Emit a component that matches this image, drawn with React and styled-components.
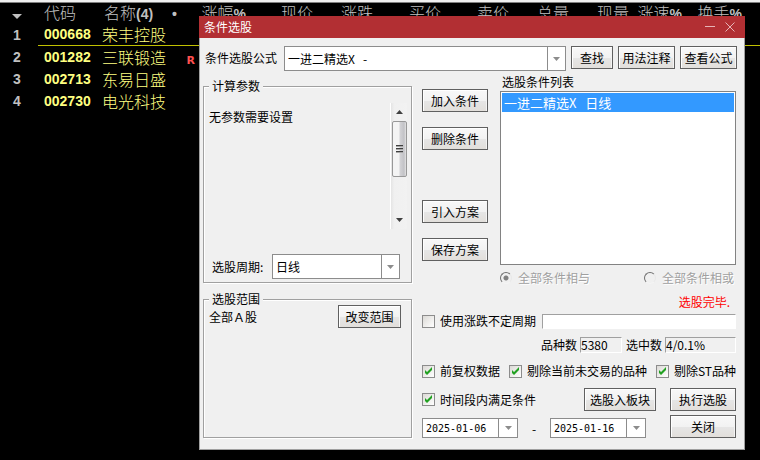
import { useState } from "react";
import styled, { createGlobalStyle } from "styled-components";

const GlobalStyle = createGlobalStyle`
  * {
    box-sizing: border-box;
  }

  body {
    margin: 0;
    background: #000;
    font-family: "Noto Sans CJK SC", sans-serif;
    font-size: 12px;
    line-height: 18px;
  }

  button, input, select {
    font: inherit;
    color: inherit;
    margin: 0;
  }
`;

const Screen = styled.main`
  position: relative;
  min-height: 100vh;
  overflow: hidden;
  background: #000;
  border-top: 2px solid #f0f0f0;
`;

const Quotes = styled.table`
  width: 100%;
  table-layout: fixed;
  border-collapse: collapse;
  border-top: 1px solid #808080;
`;

const Col = styled.col`
  width: ${(props) => props.$width};
`;

const HeadCell = styled.th`
  height: 21px;
  padding: 0 0 0 ${(props) => props.$indent || "0"};
  color: #c0c0c0;
  font-size: 16px;
  font-weight: 300;
  line-height: 18px;
  text-align: ${(props) => props.$align || "right"};
  vertical-align: top;
  white-space: nowrap;

  b {
    font: bold 14px "Liberation Sans", sans-serif;
  }
`;

const Cell = styled.td`
  height: 22px;
  padding: 0 0 0 ${(props) => props.$indent || "0"};
  color: ${(props) => props.$color || "#ffff80"};
  font-size: 16px;
  font-weight: 300;
  line-height: 20px;
  text-align: ${(props) => props.$align || "left"};
  white-space: nowrap;
`;

const NumberCell = styled(Cell)`
  font: bold 14px "Liberation Sans", sans-serif;
`;

const MarkCell = styled(Cell)`
  font: bold 11px "DejaVu Sans", sans-serif;
  vertical-align: bottom;
`;

const QuoteRow = styled.tr`
  td + td {
    border-bottom: 1px solid ${(props) => (props.$active ? "#c0c000" : "#000")};
  }
`;

const Dialog = styled.section`
  position: absolute;
  top: 14px;
  left: 199px;
  right: 15px;
  background: #f0f0f0;
  color: #000;
  border: 1px solid #a0a0a0;
  border-top: none;
`;

const TitleBar = styled.header`
  display: flex;
  align-items: center;
  height: 22px;
  margin: 0 -1px;
  padding: 0 5px;
  background: #b22f33;
  color: #fff;
`;

const Title = styled.h1`
  flex: 1;
  margin: 0;
  font-size: 12px;
  font-weight: normal;
`;

const TitleButton = styled.button`
  display: flex;
  width: 20px;
  padding: 0 5px;
  background: none;
  border: none;
`;

const FormulaBar = styled.div`
  display: flex;
  gap: 5px;
  align-items: flex-start;
  padding: 8px 7px 0 5px;
`;

const FormulaLabel = styled.label`
  width: 74px;
  line-height: 24px;
`;

const Body = styled.div`
  display: grid;
  grid-template-columns: 209px 1fr;
  gap: 10px;
  padding: 4px 8px 11px 3px;
`;

const Button = styled.button`
  width: ${(props) => props.$width || "66px"};
  height: 23px;
  padding: 0;
  line-height: 18px;
  white-space: nowrap;
  background: linear-gradient(#f8f8f8, #f2f2f2 50%, #e6e6e6 51%, #e2dfdb);
  border: 1px solid #606060;
  box-shadow: inset 1px 1px #fff, inset -1px 0 #f4f4f4;
`;

const ComboFrame = styled.div`
  display: grid;
  flex: 1;
  min-width: 0;
  height: 25px;
  background: #fff;
  border: 1px solid #8c8c8c;
`;

const ComboSelect = styled.select`
  grid-area: 1 / 1;
  width: 100%;
  padding: 0 20px 0 3px;
  appearance: none;
  background: none;
  border: none;
  border-radius: 0;
  outline: none;
`;

const ComboArrow = styled.span`
  display: flex;
  grid-area: 1 / 1;
  justify-self: end;
  align-items: center;
  justify-content: center;
  width: 18px;
  border-left: 1px solid #8c8c8c;
  pointer-events: none;
`;

const LeftColumn = styled.div`
  display: flex;
  flex-direction: column;
  gap: 10px;
  padding-top: 5px;
`;

const Group = styled.fieldset`
  flex: ${(props) => (props.$fill ? "1" : "none")};
  min-width: 0;
  margin: 0;
  padding: 0 4px 3px 5px;
  border: 1px solid #a0a0a0;
  box-shadow: 1px 1px #fff, inset 1px 1px #fff;
`;

const Legend = styled.legend`
  padding: 0 3px;
  line-height: 12px;
  background: #f0f0f0;
`;

const ParamPanel = styled.div`
  display: flex;
  justify-content: space-between;
  height: 126px;
  margin-top: 11px;
`;

const ParamText = styled.p`
  margin: 5px 0 0;
`;

const ScrollBar = styled.div`
  display: flex;
  flex-direction: column;
  align-items: center;
  width: 17px;
  background: linear-gradient(90deg, #e4e4e4, #f0f0f0 20%, #f2f2f2);
  border-left: 1px solid #fff;
`;

const ScrollArrow = styled.button`
  display: flex;
  align-items: center;
  justify-content: center;
  width: 16px;
  height: 18px;
  padding: 0;
  background: none;
  border: none;
`;

const ScrollThumb = styled.div`
  display: flex;
  flex-direction: column;
  align-items: center;
  justify-content: center;
  gap: 1px;
  width: 15px;
  height: 56px;
  margin-bottom: auto;
  background: linear-gradient(90deg, #f4f4f4 45%, #d2d2d5 55%, #c2c2c6 85%, #e4e4e4);
  border: 1px solid #989898;
  border-radius: 2px;
`;

const GripLine = styled.span`
  width: 7px;
  height: 2px;
  border-top: 1px solid #404040;
  border-bottom: 1px solid #a8a8a8;
`;

const PeriodRow = styled.div`
  display: grid;
  grid-template-columns: 60px 1fr;
  align-items: center;
  margin-top: 25px;
  padding: 0 7px 0 3px;
`;

const RangeRow = styled.div`
  display: flex;
  align-items: center;
  justify-content: space-between;
  padding-right: 6px;
`;

const RightColumn = styled.div`
  display: flex;
  flex-direction: column;
`;

const Conditions = styled.div`
  display: grid;
  grid-template-columns: 66px 1fr;
  gap: 12px;
`;

const ActionColumn = styled.div`
  display: flex;
  flex-direction: column;
  gap: 50px;
  padding-top: 14px;
`;

const ActionGroup = styled.div`
  display: flex;
  flex-direction: column;
  gap: 15px;
`;

const ListColumn = styled.div`
  display: flex;
  flex-direction: column;
`;

const ListTitle = styled.h2`
  margin: 0 0 2px 2px;
  font-size: 12px;
  font-weight: normal;
  line-height: 14px;
`;

const ListBox = styled.ul`
  min-height: 174px;
  margin: 0;
  padding: 1px;
  list-style: none;
  background: #fff;
  border: 1px solid #828282;
`;

const ListItem = styled.li`
  height: 19px;
  padding-left: 2px;
  color: #fff;
  font-size: 13px;
  line-height: 19px;
  background: #3399ff;
`;

const RadioRow = styled.div`
  display: flex;
  justify-content: space-between;
  margin-top: 4px;
  padding-right: 2px;
`;

const RadioLabel = styled.label`
  display: flex;
  gap: 6px;
  align-items: center;
  color: #a0a0a0;
  text-shadow: 1px 1px #fff;
`;

const Radio = styled.input`
  width: 12px;
  height: 12px;
  appearance: none;
  background: ${(props) =>
    props.checked ? "radial-gradient(#808080 2px, #f0f0f0 3px)" : "#f0f0f0"};
  border: 1px solid;
  border-color: #707070 #e8e8e8 #f4f4f4 #707070;
  border-radius: 50%;
`;

const Status = styled.p`
  margin: 6px 6px 0 0;
  color: #f00;
  text-align: right;
`;

const Row = styled.div`
  display: flex;
  align-items: ${(props) => props.$align || "center"};
  justify-content: ${(props) => props.$justify || "space-between"};
  margin-top: ${(props) => props.$top || "8px"};
`;

const CheckLabel = styled.label`
  display: flex;
  gap: 5px;
  align-items: center;
  white-space: nowrap;
`;

const CheckFrame = styled.span`
  display: grid;
  width: 13px;
  height: 13px;

  svg {
    grid-area: 1 / 1;
    pointer-events: none;
  }
`;

const CheckInput = styled.input`
  grid-area: 1 / 1;
  width: 13px;
  height: 13px;
  appearance: none;
  background: linear-gradient(135deg, #dcdad6, #fff);
  border: 1px solid #8c8c8c;
`;

const Progress = styled.input`
  flex: 1;
  min-width: 0;
  height: 15px;
  margin-left: 6px;
  padding: 0;
  background: #fff;
  border: 1px solid;
  border-color: #a0a0a0 #fff #fff #a0a0a0;
  border-radius: 0;
`;

const Count = styled.output`
  width: ${(props) => props.$width};
  height: 16px;
  margin: 0 4px 0 3px;
  line-height: 14px;
  border: 1px solid;
  border-color: #a0a0a0 #fff #fff #a0a0a0;

  &:last-child {
    margin-right: 0;
  }
`;

const DateFrame = styled.div`
  display: flex;
  width: 96px;
  height: 20px;
  background: #fff;
  border: 1px solid #8c8c8c;
`;

const DateInput = styled.input`
  flex: 1;
  min-width: 0;
  padding: 0 0 0 3px;
  font: 10px "DejaVu Sans Mono", monospace;
  background: none;
  border: none;
  outline: none;
`;

const DateButton = styled.button`
  display: flex;
  align-items: center;
  justify-content: center;
  width: 19px;
  padding: 0;
  background: none;
  border: none;
  border-left: 1px solid #8c8c8c;
`;

const DateDash = styled.span`
  width: 32px;
  text-align: center;
`;

const Push = styled.div`
  display: flex;
  gap: 14px;
  margin-left: auto;
`;

const stocks = [
  { code: "000668", name: "荣丰控股", active: true },
  { code: "001282", name: "三联锻造", mark: "R" },
  { code: "002713", name: "东易日盛" },
  { code: "002730", name: "电光科技" },
];

const columns = [
  { title: "涨幅", unit: "%", width: "51px" },
  { title: "现价", width: "67px" },
  { title: "涨跌", width: "60px" },
  { title: "买价", width: "68px" },
  { title: "卖价", width: "68px" },
  { title: "总量", width: "60px" },
  { title: "现量", width: "60px" },
  { title: "涨速", unit: "%", width: "53px" },
  { title: "换手", unit: "%", width: "60px" },
];

const Triangle = ({ width = 7, height = 4, color = "#8c8c8c", up }) => (
  <svg width={width} height={height} viewBox="0 0 8 4" preserveAspectRatio="none">
    <path d={up ? "M0 4h8L4 0z" : "M0 0h8L4 4z"} fill={color} />
  </svg>
);

const Combo = ({ id, value }) => (
  <ComboFrame>
    <ComboSelect id={id} defaultValue={value}>
      <option value={value}>{value}</option>
    </ComboSelect>
    <ComboArrow>
      <Triangle />
    </ComboArrow>
  </ComboFrame>
);

const CheckBox = ({ label, checked: initial = false }) => {
  const [checked, setChecked] = useState(initial);

  return (
    <CheckLabel>
      <CheckFrame>
        <CheckInput
          type="checkbox"
          checked={checked}
          onChange={(e) => setChecked(e.target.checked)}
        />
        {checked && (
          <svg width="13" height="13" viewBox="0 0 13 13">
            <path d="M3 5v3l2 2 5-5V2L5 7z" fill="#21a121" />
          </svg>
        )}
      </CheckFrame>
      {label}
    </CheckLabel>
  );
};

const DateField = ({ label, value }) => (
  <DateFrame>
    <DateInput type="text" aria-label={label} defaultValue={value} />
    <DateButton type="button" aria-label={label}>
      <Triangle />
    </DateButton>
  </DateFrame>
);

const QuoteTable = () => (
  <Quotes>
    <colgroup>
      <Col $width="38px" />
      <Col $width="60px" />
      <Col $width="72px" />
      <Col $width="25px" />
      {columns.map((column) => (
        <Col key={column.title} $width={column.width} />
      ))}
      <Col />
    </colgroup>
    <thead>
      <tr>
        <HeadCell $align="left" $indent="12px">
          <Triangle width={10} height={5} color="#c0c0c0" />
        </HeadCell>
        <HeadCell $align="left" $indent="6px">代码</HeadCell>
        <HeadCell $align="left" $indent="6px">
          名称<b>(4)</b>
        </HeadCell>
        <HeadCell $align="left" $indent="2px">
          <b>•</b>
        </HeadCell>
        {columns.map((column) => (
          <HeadCell key={column.title}>
            {column.title}
            {column.unit && <b>{column.unit}</b>}
          </HeadCell>
        ))}
        <HeadCell />
      </tr>
    </thead>
    <tbody>
      {stocks.map((stock, index) => (
        <QuoteRow key={stock.code} $active={stock.active}>
          <NumberCell $color="#c0c0c0" $indent="13px">
            {index + 1}
          </NumberCell>
          <NumberCell $indent="6px">{stock.code}</NumberCell>
          <Cell $indent="4px">{stock.name}</Cell>
          <MarkCell $color="#ff5050" $align="right">
            {stock.mark}
          </MarkCell>
          <Cell colSpan={columns.length + 1} />
        </QuoteRow>
      ))}
    </tbody>
  </Quotes>
);

const App = () => {
  return (
    <>
      <GlobalStyle />
      <Screen>
        <QuoteTable />
        <Dialog role="dialog" aria-labelledby="dialog-title">
          <TitleBar>
            <Title id="dialog-title">条件选股</Title>
            <TitleButton type="button" aria-label="最小化">
              <svg width="10" height="10" viewBox="0 0 10 10">
                <path d="M0 4.5h10" stroke="#e6b4b6" />
              </svg>
            </TitleButton>
            <TitleButton type="button" aria-label="关闭窗口">
              <svg width="10" height="10" viewBox="0 0 10 10">
                <path d="M.5.5l9 9M9.5.5l-9 9" stroke="#e6b4b6" />
              </svg>
            </TitleButton>
          </TitleBar>

          <FormulaBar>
            <FormulaLabel htmlFor="formula">条件选股公式</FormulaLabel>
            <Combo id="formula" value={"一进二精选X\u00a0\u00a0\u00a0-"} />
            <Button $width="42px">查找</Button>
            <Button $width="57px">用法注释</Button>
            <Button $width="57px">查看公式</Button>
          </FormulaBar>

          <Body>
            <LeftColumn>
              <Group>
                <Legend>计算参数</Legend>
                <ParamPanel>
                  <ParamText>无参数需要设置</ParamText>
                  <ScrollBar>
                    <ScrollArrow type="button" aria-label="向上">
                      <Triangle color="#404040" up />
                    </ScrollArrow>
                    <ScrollThumb>
                      <GripLine />
                      <GripLine />
                      <GripLine />
                    </ScrollThumb>
                    <ScrollArrow type="button" aria-label="向下">
                      <Triangle color="#404040" />
                    </ScrollArrow>
                  </ScrollBar>
                </ParamPanel>
                <PeriodRow>
                  <label htmlFor="period">选股周期:</label>
                  <Combo id="period" value="日线" />
                </PeriodRow>
              </Group>
              <Group $fill>
                <Legend>选股范围</Legend>
                <RangeRow>
                  <span>全部Ａ股</span>
                  <Button $width="63px">改变范围</Button>
                </RangeRow>
              </Group>
            </LeftColumn>

            <RightColumn>
              <Conditions>
                <ActionColumn>
                  <ActionGroup>
                    <Button>加入条件</Button>
                    <Button>删除条件</Button>
                  </ActionGroup>
                  <ActionGroup>
                    <Button>引入方案</Button>
                    <Button>保存方案</Button>
                  </ActionGroup>
                </ActionColumn>
                <ListColumn>
                  <ListTitle>选股条件列表</ListTitle>
                  <ListBox>
                    <ListItem>一进二精选X{"\u00a0\u00a0\u00a0"}日线</ListItem>
                  </ListBox>
                  <RadioRow>
                    <RadioLabel>
                      <Radio type="radio" name="join" checked readOnly disabled />
                      全部条件相与
                    </RadioLabel>
                    <RadioLabel>
                      <Radio type="radio" name="join" disabled />
                      全部条件相或
                    </RadioLabel>
                  </RadioRow>
                  <Status>选股完毕.</Status>
                </ListColumn>
              </Conditions>

              <Row $top="1px">
                <CheckBox label="使用涨跌不定周期" />
                <Progress type="text" aria-label="进度" readOnly />
              </Row>
              <Row $top="6px" $justify="flex-end">
                <span>品种数</span>
                <Count $width="42px">5380</Count>
                <span>选中数</span>
                <Count $width="71px">4/0.1%</Count>
              </Row>
              <Row>
                <CheckBox label="前复权数据" checked />
                <CheckBox label="剔除当前未交易的品种" checked />
                <CheckBox label="剔除ST品种" checked />
              </Row>
              <Row>
                <CheckBox label="时间段内满足条件" checked />
                <Push>
                  <Button $width="72px">选股入板块</Button>
                  <Button>执行选股</Button>
                </Push>
              </Row>
              <Row $top="4px" $align="flex-end">
                <DateField label="开始日期" value="2025-01-06" />
                <DateDash>-</DateDash>
                <DateField label="结束日期" value="2025-01-16" />
                <Push>
                  <Button>关闭</Button>
                </Push>
              </Row>
            </RightColumn>
          </Body>
        </Dialog>
      </Screen>
    </>
  );
};

export default App;
